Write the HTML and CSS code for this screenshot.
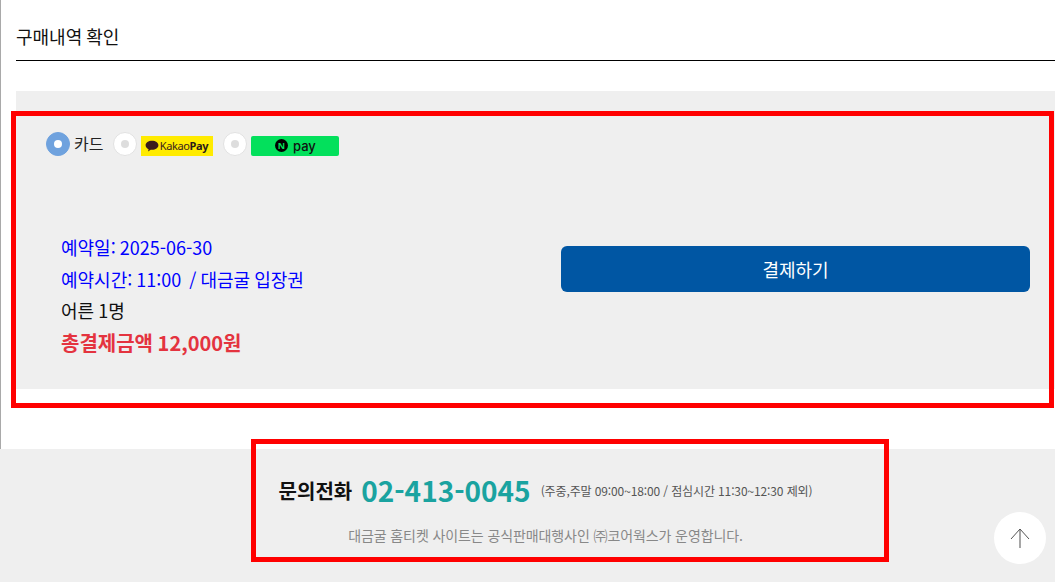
FILE: index.html
```html
<!DOCTYPE html>
<html lang="ko">
<head>
<meta charset="utf-8">
<title>구매내역 확인</title>
<link rel="stylesheet" href="styles.css">
</head>
<body>
<main class="page">
  <h1 class="title">구매내역 확인</h1>
  <section class="panel">
    <div class="methods">
      <span class="radio radio-on"></span>
      <span class="method-label">카드</span>
      <span class="radio"></span>
      <span class="kakao">
        <svg class="kakao-bubble" viewBox="0 0 14 12" width="14" height="12"><path d="M7 .8C3.4.8.6 2.8.6 5.3c0 1.7 1.2 3.1 3 3.9l-.6 2.3 2.7-1.8c.4.1.9.1 1.3.1 3.6 0 6.4-2 6.4-4.5S10.6.8 7 .8z"/></svg>
        <span class="kakao-text">Kakao<b>Pay</b></span>
      </span>
      <span class="radio"></span>
      <span class="npay"><span class="npay-n">N</span><span class="npay-text">pay</span></span>
    </div>
    <div class="summary">
      <div class="info">
        <p class="line blue">예약일: 2025-06-30</p>
        <p class="line blue">예약시간: 11:00 &nbsp;/ 대금굴 입장권</p>
        <p class="line">어른 1명</p>
        <p class="line total">총결제금액 12,000원</p>
      </div>
      <button class="pay" type="button">결제하기</button>
    </div>
  </section>
  <footer class="footer">
    <div class="contact">
      <strong class="contact-label">문의전화</strong>
      <span class="phone">02-413-0045</span>
      <span class="hours">(주중,주말 09:00~18:00 / 점심시간 11:30~12:30 제외)</span>
    </div>
    <p class="notice">대금굴 홈티켓 사이트는 공식판매대행사인 ㈜코어웍스가 운영합니다.</p>
    <button class="top" type="button" aria-label="맨 위로">
      <svg viewBox="0 0 20 20" width="20" height="20"><path d="M10 20V1" fill="none" stroke="#808080" stroke-width="1.4"/><path d="M1 11l9-10 9 10" fill="none" stroke="#555" stroke-width="1"/></svg>
    </button>
  </footer>
</main>
<div class="mark mark-pay"></div>
<div class="mark mark-contact"></div>
</body>
</html>
```
FILE: styles.css
```css
* { box-sizing: border-box; }
html, body { height: 100%; }
body {
  margin: 0;
  background: #fff;
  font-family: "Noto Sans CJK KR", "Noto Sans", sans-serif;
  color: #111;
  overflow: hidden;
}
.page {
  height: 582px;
  border-left: 1px solid #a9a9a9;
  display: flex;
  flex-direction: column;
}
.title {
  margin: 0 0 30px 15px;
  height: 61px;
  padding-top: 23px;
  border-bottom: 1px solid #000;
  font-size: 18px;
  line-height: 26px;
  font-weight: 400;
  word-spacing: -1px;
  color: #111;
}
.panel {
  margin-left: 15px;
  height: 298px;
  background: #efefef;
  padding: 41px 25px 0 30px;
}
.methods {
  display: flex;
  align-items: center;
  height: 24px;
}
.radio {
  width: 24px;
  height: 24px;
  border-radius: 50%;
  background: #fff;
  border: 1px solid #e2e2e2;
  display: flex;
  align-items: center;
  justify-content: center;
  margin-top: -1px;
}
.radio::after {
  content: "";
  width: 8px;
  height: 8px;
  border-radius: 50%;
  background: #ddd;
}
.radio-on {
  background: #6fa2de;
  border-color: #6fa2de;
}
.radio-on::after { background: #fff; }
.method-label {
  font-size: 16px;
  line-height: 20px;
  margin: -3px 10px 0 4px;
  color: #222;
}
.kakao {
  width: 72px;
  height: 20px;
  margin: 3px 10px 0 4px;
  background: #ffeb00;
  display: flex;
  align-items: center;
  justify-content: center;
  gap: 1px;
  padding-right: 2px;
}
.kakao-bubble { fill: #3a1d1d; }
.kakao-text {
  font-family: "Noto Sans", sans-serif;
  font-size: 11px;
  line-height: 20px;
  color: #3a1d1d;
  letter-spacing: -.4px;
}
.kakao-text b { font-weight: 700; color: #2a1a1a; }
.npay {
  width: 88px;
  height: 20px;
  margin: 3px 0 0 4px;
  background: #03e05c;
  border-radius: 2px;
  display: flex;
  align-items: center;
  justify-content: center;
  gap: 5px;
}
.npay-n {
  width: 13px;
  height: 13px;
  border-radius: 50%;
  background: #000;
  color: #03e05c;
  font: 700 9px/13px "Noto Sans", sans-serif;
  text-align: center;
}
.npay-text {
  font: 500 13px/18px "Inter", sans-serif;
  color: #111;
}
.summary {
  display: flex;
  align-items: flex-start;
  margin-top: 76px;
}
.info { width: 515px; padding-left: 15px; }
.line {
  margin: 0;
  font-size: 18px;
  line-height: 31.5px;
  word-spacing: -1px;
  color: #111;
}
.blue { color: #0000ff; }
.total {
  font-size: 20px;
  font-weight: 700;
  word-spacing: -1px;
  color: #e4333f;
}
.pay {
  flex: 1;
  height: 46px;
  margin-top: 14px;
  border: 0;
  border-radius: 6px;
  background: #0056a3;
  color: #fff;
  font: 400 18px/44px "Noto Sans CJK KR", sans-serif;
}
.footer {
  position: relative;
  margin-top: 60px;
  margin-left: -1px;
  flex: 1;
  background: #efefef;
  padding-top: 22px;
  text-align: center;
}
.contact {
  display: flex;
  align-items: center;
  justify-content: center;
  height: 38px;
  padding-left: 36px;
}
.contact-label { font-size: 20px; font-weight: 700; color: #111; }
.phone {
  margin: 0 10px 0 9px;
  font-size: 28px;
  font-weight: 700;
  color: #1aa3a0;
}
.hours { font-size: 12px; color: #555; letter-spacing: -.12px; }
.notice {
  margin: 16px 0 0;
  padding-left: 36px;
  font-size: 14px;
  line-height: 20px;
  letter-spacing: -.1px;
  color: #888;
}
.top {
  position: absolute;
  right: 9px;
  top: 63px;
  width: 52px;
  height: 52px;
  border: 0;
  border-radius: 50%;
  background: #fff;
  display: flex;
  align-items: center;
  justify-content: center;
  padding: 0;
}
.mark { position: absolute; border: 5px solid #f00; }
.mark-pay { left: 11px; top: 111px; width: 1043px; height: 297px; }
.mark-contact { left: 251px; top: 439px; width: 638px; height: 123px; }
```
